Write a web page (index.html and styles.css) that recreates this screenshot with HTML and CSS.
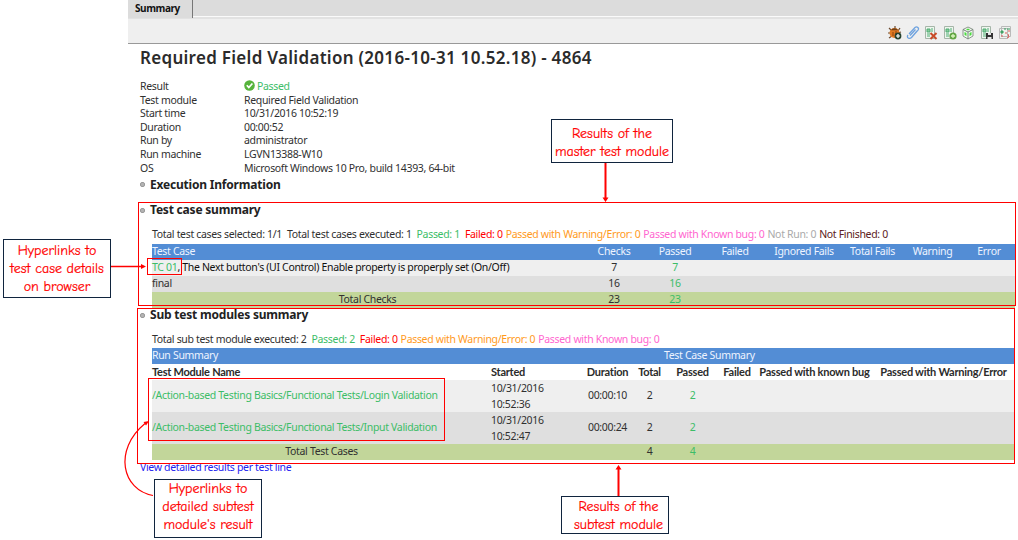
FILE: index.html
```html
<!DOCTYPE html>
<html lang="en">
<head>
<meta charset="utf-8">
<title>Required Field Validation</title>
<link rel="stylesheet" href="styles.css">
</head>
<body>
<main class="window">
  <div class="tabs"><div class="tab">Summary</div></div>
  <div class="toolbar">
    <svg class="tool" viewBox="0 0 14 14"><path d="M1 2l3 3M7 0v3M12 2l-2 3M0 7h3M1 12l3-2M13 6l-3 1" stroke="#6b4a30" stroke-width="1.2"/><ellipse cx="6.5" cy="7" rx="5" ry="5" fill="#e07a22"/><path d="M3 4.300C4 1.600 9 1.600 10 4.300z" fill="#704018"/><path d="M5 6v4M8 5v3" stroke="#8d420c"/><circle cx="10" cy="10" r="3.400" fill="#26422f"/><path d="M10 8v4M8 10h4" stroke="#fff" stroke-width="1.200"/></svg>
    <svg class="tool" viewBox="0 0 14 14" fill="none" stroke="#6fa3df" stroke-width="1.300"><path d="M4 9.500l5.500-6M3 8l6-6.500c2-1.600 4.500.600 3 2.600L5.500 11.500c-2 2-5.500.200-3.500-2.500M5.500 11.500L11 5"/></svg>
    <svg class="tool" viewBox="0 0 14 14"><path d="M1.500.500h9v12h-9z" fill="#eef5ee" stroke="#a5b5a8"/><path d="M3 3h3v3H3zM7 3h2M7 5h2M3 8h3M3 10h3" stroke="#4fae74" fill="#8bca9a"/><path d="M6.500 7l6 6M12.500 7l-6 6" stroke="#c84b28" stroke-width="2"/></svg>
    <svg class="tool" viewBox="0 0 14 14"><path d="M1.500.500h9v12h-9z" fill="#eef5ee" stroke="#a5b5a8"/><path d="M3 3h3v3H3zM7 3h2M7 5h2M3 8h3M3 10h3" stroke="#4fae74" fill="#8bca9a"/><circle cx="10" cy="10" r="3.600" fill="#62a644"/><path d="M10 8v4M8 10h4" stroke="#d9f5bd" stroke-width="1.300"/></svg>
    <svg class="tool" viewBox="0 0 14 14"><path d="M7 1l5 2.500v6.500L7 13 2 10V3.500z" fill="#f3faf2" stroke="#8b968c"/><path d="M2 3.500L7 6l5-2.500M7 6v7" fill="none" stroke="#77847a"/><path d="M3.500 6l2 1v3l-2-1zM8.500 7l2-1v3l-2 1zM5 3.500l2-1 2 1-2 1z" fill="#4bdc3e"/></svg>
    <svg class="tool" viewBox="0 0 14 14"><path d="M1.500.500h9v12h-9z" fill="#eef5ee" stroke="#a5b5a8"/><path d="M3 3h3v3H3zM7 3h2M7 5h2M3 8h3M3 10h3" stroke="#4fae74" fill="#8bca9a"/><path d="M6 7h7v6H6z" fill="#333"/><path d="M8 7h3v2H8zM7.500 11h4v2h-4z" fill="#e8e8e8"/></svg>
    <svg class="tool" viewBox="0 0 14 14"><path d="M3.500.500h9v10h-9zM1.500 2.500h8v10h-8z" fill="#eef2ee" stroke="#bababa"/><path d="M3 5h2v2H3zM6 3h2M9 3h3" stroke="#349b5e" fill="#63b67d"/><path d="M7 7h2M3 10h2M10 8l1 3-2 1M10 5h2" fill="none" stroke="#db5c5c"/></svg>
  </div>

  <article class="report">
    <h1 class="title">Required Field Validation (2016-10-31 10.52.18) - 4864</h1>
    <dl class="facts">
      <dt>Result</dt><dd class="pass"><svg class="ok" viewBox="0 0 11 11"><circle cx="5.500" cy="5.500" r="5.300" fill="#56b33b"/><path d="M2.800 5.300l2 2.200 3.600-4" fill="none" stroke="#fff" stroke-width="1.700"/></svg>Passed</dd>
      <dt>Test module</dt><dd>Required Field Validation</dd>
      <dt>Start time</dt><dd>10/31/2016 10:52:19</dd>
      <dt>Duration</dt><dd>00:00:52</dd>
      <dt>Run by</dt><dd>administrator</dd>
      <dt>Run machine</dt><dd>LGVN13388-W10</dd>
      <dt>OS</dt><dd>Microsoft Windows 10 Pro, build 14393, 64-bit</dd>
    </dl>

    <h2 class="section first"><i class="bullet"></i>Execution Information</h2>

    <h2 class="section cases"><i class="bullet"></i>Test case summary</h2>
    <p class="totals"><span>Total test cases selected: 1/1</span><span class="gap">Total test cases executed: 1</span><span class="pass gap">Passed: 1</span><span class="fail gap">Failed: 0</span><span class="warn">Passed with Warning/Error: 0</span><span class="bug">Passed with Known bug: 0</span><span class="norun">Not Run: 0</span><span class="unfinished">Not Finished: 0</span></p>
    <table class="grid">
      <colgroup><col class="a1"><col class="a2"><col class="a3"><col class="a4"><col class="a5"><col class="a6"><col class="a7"><col class="a8"></colgroup>
      <tr class="head"><td class="left">Test Case</td><td>Checks</td><td>Passed</td><td>Failed</td><td>Ignored Fails</td><td>Total Fails</td><td>Warning</td><td>Error</td></tr>
      <tr class="light"><td class="left dark"><span class="pass">TC 01</span>, The Next button's (UI Control) Enable property is properply set (On/Off)</td><td>7</td><td class="pass">7</td><td></td><td></td><td></td><td></td><td></td></tr>
      <tr class="mid"><td class="left">final</td><td>16</td><td class="pass">16</td><td></td><td></td><td></td><td></td><td></td></tr>
      <tr class="sum"><td>Total Checks</td><td>23</td><td class="pass">23</td><td></td><td></td><td></td><td></td><td></td></tr>
    </table>

    <h2 class="section subs"><i class="bullet"></i>Sub test modules summary</h2>
    <p class="totals"><span>Total sub test module executed: 2</span><span class="pass gap">Passed: 2</span><span class="fail gap">Failed: 0</span><span class="warn">Passed with Warning/Error: 0</span><span class="bug">Passed with Known bug: 0</span></p>
    <table class="grid modules">
      <colgroup><col class="b1"><col class="b2"><col class="b3"><col class="b4"><col class="b5"><col class="b6"><col class="b7"><col class="b8"></colgroup>
      <tr class="head"><td class="left" colspan="3">Run Summary</td><td class="left group" colspan="5">Test Case Summary</td></tr>
      <tr class="names"><th class="left">Test Module Name</th><th class="left">Started</th><th>Duration</th><th>Total</th><th>Passed</th><th>Failed</th><th>Passed with known bug</th><th>Passed with Warning/Error</th></tr>
      <tr class="light"><td class="left pass">/Action-based Testing Basics/Functional Tests/Login Validation</td><td class="left when">10/31/2016<br>10:52:36</td><td>00:00:10</td><td>2</td><td class="pass">2</td><td></td><td></td><td></td></tr>
      <tr class="mid"><td class="left pass">/Action-based Testing Basics/Functional Tests/Input Validation</td><td class="left when">10/31/2016<br>10:52:47</td><td>00:00:24</td><td>2</td><td class="pass">2</td><td></td><td></td><td></td></tr>
      <tr class="sum"><td>Total Test Cases</td><td></td><td></td><td>4</td><td class="pass">4</td><td></td><td></td><td></td></tr>
    </table>
    <a class="details">View detailed results per test line</a>
  </article>
</main>

<svg class="marks" viewBox="0 0 1018 540" fill="none" stroke="#f00">
  <rect x="138.500" y="202.500" width="877" height="103"/>
  <rect x="137.500" y="308.500" width="877" height="155"/>
  <rect x="147.500" y="258.500" width="34" height="16"/>
  <rect x="148.500" y="378.500" width="296" height="62"/>
  <path d="M605.500 162V199M618.500 497V468" stroke-width="2"/>
  <path d="M111 266.500h32" stroke-width="1.500"/>
  <path d="M153 495.500C122 490 113 450 145 423.500" stroke-width="1.200"/>
  <path d="M602.500 197.500h6l-3 4.500zM615.500 469.500h6l-3-4.500zM141 264v5l5-2.500zM149 421l-5.500 1 2.500 3.500z" fill="#f00" stroke="none"/>
</svg>
<div class="note master">Results of the<br>master test module</div>
<div class="note browser">Hyperlinks to<br>test case details<br>on browser</div>
<div class="note result">Hyperlinks to<br>detailed subtest<br>module's result</div>
<div class="note subtest">Results of the<br>subtest module</div>
</body>
</html>
```
FILE: styles.css
```css
* { box-sizing: border-box; }
body { margin: 0; width: 1018px; height: 540px; overflow: hidden; background: #fff; color: #303030; font: 10.5px/16px "Noto Sans", "Open Sans", sans-serif; letter-spacing: -0.325px; }
.window { margin-left: 128px; }
.tabs { height: 19px; background: #dcdcdc; border-bottom: 2px solid #e2e2e2; box-shadow: inset 0 -1px #fafafa; }
.tab { width: 65px; height: 18px; padding-left: 7px; background: #dcdcdc; border-right: 1px solid #777; color: #111; font: bold 10px/17px "Open Sans", sans-serif; letter-spacing: -0.450px; }
.toolbar { height: 25px; display: flex; justify-content: flex-end; align-items: center; gap: 4.400px; padding: 3px 6px 0 0; background: #efefef; border-bottom: 1px solid #999; }
.tool { width: 14px; height: 14px; fill: none; }
.report { padding-left: 12px; }
.title { margin: 0; height: 35px; color: #2b2b2b; font-size: 17px; line-height: 27px; font-weight: 600; letter-spacing: 0.290px; }
.facts { margin: 0; display: grid; grid-template-columns: 104px 1fr; grid-auto-rows: 13.600px; line-height: 14px; }
.facts dd { margin: 0; }
.ok { width: 11px; height: 11px; margin-right: 2px; vertical-align: -1px; }
.section { margin: 0; display: flex; align-items: center; gap: 5px; color: #222; font-size: 12px; line-height: 20px; letter-spacing: -0.200px; }
.first { height: 20px; padding-top: 1px; }
.cases { margin-top: 6px; }
.subs { margin-top: -3px; }
.bullet { width: 5px; height: 5px; border-radius: 2px; background: #b4b4b4; border: 1px solid #999; }
.totals { margin: 6px 0 0 12px; height: 18px; line-height: 17px; display: flex; gap: 3px; white-space: nowrap; }
.subs + .totals { height: 17px; }
.totals .gap { margin-left: 2px; }
.pass { color: #3cbd67; }
.fail { color: #f00; }
.warn { color: #ff9a1c; }
.bug { color: #ff66d0; }
.norun { color: #aaa; }
.unfinished { color: #5c2020; }
.grid { margin-left: 12px; width: 863px; table-layout: fixed; border-collapse: collapse; text-align: center; white-space: nowrap; }
.grid tr { height: 16px; }
.grid td, .grid th { padding: 0 0 1px; line-height: 15px; }
.grid .when { line-height: 16px; padding: 0; }
.grid th { font: bold 11px/15px Lato, sans-serif; letter-spacing: -0.240px; }
.grid .left { text-align: left; }
.grid .group { padding-left: 33px; }
.head { background: #538dd5; color: #eef4ff; }
.light { background: #efefef; }
.mid { background: #dfdfdf; }
.sum { background: #c2d69a; }
.dark { color: #111; }
.dark .pass { color: #3cbd67; }
.names { color: #2b2b2b; }
.a1 { width: 431px; } .a2 { width: 62px; } .a3 { width: 60px; } .a4 { width: 60px; }
.a5 { width: 78px; } .a6 { width: 59px; } .a7 { width: 61px; } .a8 { width: 52px; }
.b1 { width: 339px; } .b2 { width: 93px; } .b3 { width: 47px; } .b4 { width: 37px; }
.b5 { width: 49px; } .b6 { width: 40px; } .b7 { width: 115px; } .b8 { width: 143px; }
.details { display: block; line-height: 15px; color: #2222f0; }
.marks { position: absolute; left: 0; top: 0; width: 1018px; height: 540px; }
.note { position: absolute; padding-top: 5px; background: #fff; border: 1px solid #10243e; color: #f00; text-align: center; white-space: nowrap; font: 14px/18px "Comic Neue", "Comic Sans MS", "Open Sans", cursive; letter-spacing: 0; -webkit-text-stroke: 0.200px #f00; }
.master { left: 551px; top: 119px; width: 122px; height: 44px; }
.browser { left: 3px; top: 239px; width: 108px; height: 59px; padding-top: 2px; }
.result { left: 154px; top: 479px; width: 108px; height: 59px; padding-top: 0; }
.subtest { left: 561px; top: 496px; width: 108px; height: 38px; padding: 1px 0 0 7px; }
```
